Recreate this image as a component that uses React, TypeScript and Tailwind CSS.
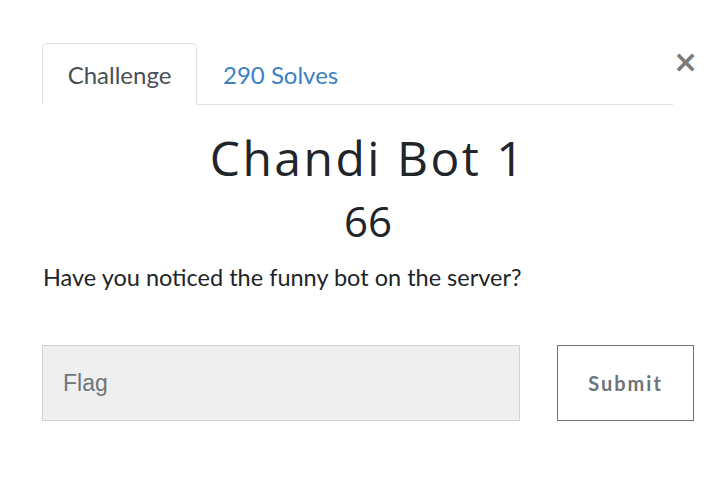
import React from 'react';

export default function App() {
  return (
    <div className="w-[728px] h-[485px] bg-white relative" style={{ fontFamily: 'Lato, sans-serif' }}>
      <button className="absolute left-[673px] top-[47px] text-[#7a7a7a] text-[30px] leading-none font-bold" style={{ fontFamily: '"DejaVu Sans", sans-serif' }}>
        ×
      </button>
      <div className="pt-[43px] pl-[42px]">
        <div className="flex w-[631px] border-b border-[#dee2e6]">
          <div className="w-[155px] h-[62px] -mb-px border border-[#dee2e6] border-b-white rounded-t-[5px] bg-white flex items-center justify-center pt-[2px] text-[24px] text-[#495057]">
            Challenge
          </div>
          <div className="h-[61px] pl-[26px] pt-[2px] flex items-center text-[24px] text-[#3a7fc1]">
            290 Solves
          </div>
        </div>
      </div>
      <div className="flex flex-col items-center mt-[24px] pl-[8px]">
        <h2 className="text-[48px] leading-[58px] text-[#212529] tracking-[2.5px]" style={{ fontFamily: '"Open Sans", sans-serif', fontWeight: 400 }}>
          Chandi Bot 1
        </h2>
        <h3 className="text-[42px] leading-[52px] text-[#212529] mt-[8px]" style={{ fontFamily: '"Open Sans", sans-serif' }}>
          66
        </h3>
      </div>
      <p className="pl-[43px] mt-[15px] text-[23.5px] leading-[30px] text-[#212529]">
        Have you noticed the funny bot on the server?
      </p>
      <div className="flex pl-[42px] mt-[53px] gap-[37px]">
        <div className="w-[478px] h-[76px] bg-[#efefef] border border-[#ced4da] flex items-center pl-[20px] text-[23px] text-[#6c757d]" style={{ fontFamily: '"Liberation Sans", sans-serif' }}>
          Flag
        </div>
        <button className="w-[137px] h-[76px] border border-[#6c757d] text-[#6c757d] text-[20px] font-bold tracking-[2px]" style={{ fontFamily: 'Lato, sans-serif' }}>
          Submit
        </button>
      </div>
    </div>
  );
}
